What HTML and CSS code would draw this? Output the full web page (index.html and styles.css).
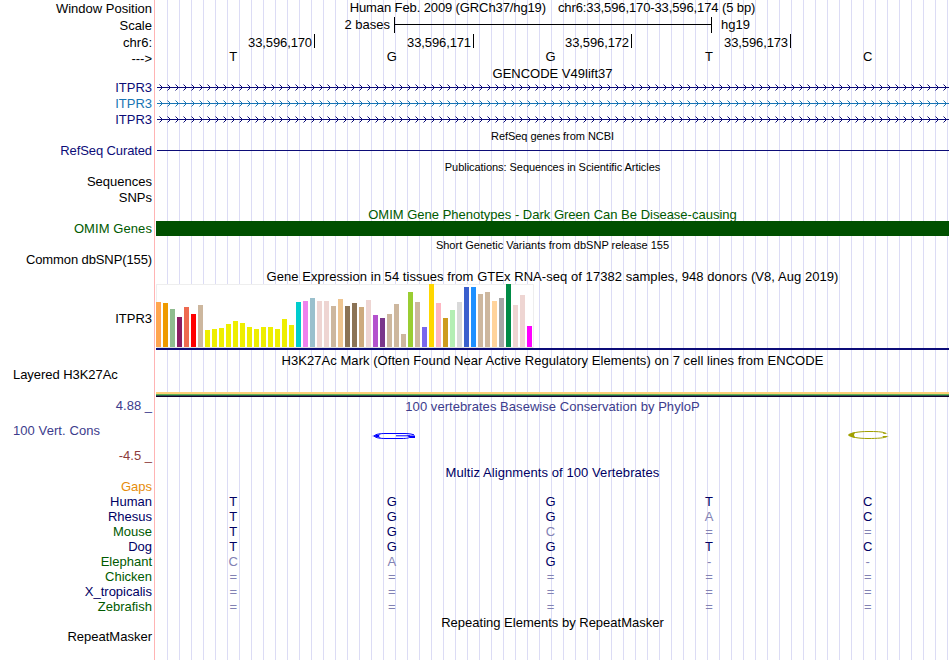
FILE: index.html
```html
<!DOCTYPE html>
<html lang="en">
<head>
<meta charset="utf-8">
<title>Genome Browser</title>
<link rel="stylesheet" href="styles.css">
</head>
<body>
<main class="browser">
  <section class="labels">
    <div class="label mt1">Window Position</div>
    <div class="label mt2">Scale</div>
    <div class="label mt2">chr6:</div>
    <div class="label mt1">---&gt;</div>
    <div class="label mt14 navy">ITPR3</div>
    <div class="label mt1 blue">ITPR3</div>
    <div class="label mt1 navy">ITPR3</div>
    <div class="label mt16 navy narrow">RefSeq Curated</div>
    <div class="label mt16">Sequences</div>
    <div class="label mt1">SNPs</div>
    <div class="label mt16 green wide">OMIM Genes</div>
    <div class="label mt16 narrow">Common dbSNP(155)</div>
    <div class="label mt44">ITPR3</div>
    <div class="label mt41 left tight">Layered H3K27Ac</div>
    <div class="label mt16 phylo">4.88 _</div>
    <div class="label mt10 left phylo wide">100 Vert. Cons</div>
    <div class="label mt10 maroon">-4.5 _</div>
    <div class="label mt16 orange">Gaps</div>
    <div class="label dark">Human</div>
    <div class="label dark">Rhesus</div>
    <div class="label green">Mouse</div>
    <div class="label dark">Dog</div>
    <div class="label green">Elephant</div>
    <div class="label green">Chicken</div>
    <div class="label dark">X_tropicalis</div>
    <div class="label green">Zebrafish</div>
    <div class="label mt15">RepeatMasker</div>
  </section>
  <section class="tracks">
    <div class="title position narrow"><span>Human Feb. 2009 (GRCh37/hg19)</span><span>chr6:33,596,170-33,596,174 (5 bp)</span></div>
    <div class="scale"><span class="scale-size">2 bases</span><i class="scale-bar"></i><span>hg19</span></div>
    <div class="ruler narrow"><span>33,596,170</span><span>33,596,171</span><span>33,596,172</span><span>33,596,173</span></div>
    <div class="bases"><b>T</b><b>G</b><b>G</b><b>T</b><b>C</b></div>
    <div class="title mt2">GENCODE V49lift37</div>
    <svg class="intron navy" width="793" height="48"></svg>
    <div class="title small mt2 tight">RefSeq genes from NCBI</div>
    <div class="refseq"></div>
    <div class="title small mt10 tight">Publications: Sequences in Scientific Articles</div>
    <div class="title green omim-title">OMIM Gene Phenotypes - Dark Green Can Be Disease-causing</div>
    <div class="omim"></div>
    <div class="title small mt3">Short Genetic Variants from dbSNP release 155</div>
    <div class="title gtex-title loose">Gene Expression in 54 tissues from GTEx RNA-seq of 17382 samples, 948 donors (V8, Aug 2019)</div>
    <div class="gtex"></div>
    <div class="gene-line"></div>
    <div class="title mt3 loose">H3K27Ac Mark (Often Found Near Active Regulatory Elements) on 7 cell lines from ENCODE</div>
    <div class="h3k"></div>
    <div class="title mt2 phylo loose">100 vertebrates Basewise Conservation by PhyloP</div>
    <div class="conservation">
      <svg class="logo-g" width="44" height="6" viewBox="0 0 44 6"><path d="M42 1.8C38 .5 34 .5 30 .5H14C8 .5 4 1 2 3C4 5 8 5.5 14 5.5H30C35 5.5 37 5 38 4M24 2.8H38" fill="none" stroke="#00f" stroke-width="1"/><path d="M0 3L9 1Q5 3 9 5ZM35 2.5H43V5H38Z" fill="#00f"/></svg>
      <svg class="logo-c" width="41" height="8" viewBox="0 0 41 8"><path d="M38 2.3C34 .5 28 .5 20 .5C10 .5 2.5 2 2.5 4C2.5 6 10 7.5 20 7.5C29 7.5 37 7 39 5.5" fill="none" stroke="#a0a000" stroke-width="1"/><path d="M0 4Q1 2 8 1Q4 4 8 7Q1 6 0 4ZM34 5H41L36 6.5ZM34 1.5L40 3H36Z" fill="#a0a000"/></svg>
    </div>
    <div class="title dark wide">Multiz Alignments of 100 Vertebrates</div>
    <div class="alignment">
      <div class="bases"><b>T</b><b>G</b><b>G</b><b>T</b><b>C</b></div>
      <div class="bases"><b>T</b><b>G</b><b>G</b><b class="diff">A</b><b>C</b></div>
      <div class="bases"><b>T</b><b>G</b><b class="diff">C</b><b class="diff">=</b><b class="diff">=</b></div>
      <div class="bases"><b>T</b><b>G</b><b>G</b><b>T</b><b>C</b></div>
      <div class="bases"><b class="diff">C</b><b class="diff">A</b><b>G</b><b class="diff">-</b><b class="diff">-</b></div>
      <div class="bases diff"><b>=</b><b>=</b><b>=</b><b>=</b><b>=</b></div>
      <div class="bases diff"><b>=</b><b>=</b><b>=</b><b>=</b><b>=</b></div>
      <div class="bases diff"><b>=</b><b>=</b><b>=</b><b>=</b><b>=</b></div>
    </div>
    <div class="title mt1">Repeating Elements by RepeatMasker</div>
  </section>
</main>
<script src="script.js"></script>
</body>
</html>
```
FILE: styles.css
```css
* { box-sizing: border-box; }
body { margin: 0; background: #fff; color: #000; font: 13px/15px "Liberation Sans", Arial, sans-serif; }
.browser { display: flex; width: 949px; height: 660px; overflow: hidden; }
.labels { width: 155px; padding-right: 2px; border-right: 1px solid #ffb4b4; display: flex; flex-direction: column; }
.label { height: 15px; flex: none; text-align: right; white-space: pre; }
.label.left { text-align: left; padding-left: 13px; }
.tracks { width: 793px; margin-left: 1px; display: flex; flex-direction: column;
  background: repeating-linear-gradient(90deg, transparent 0 11px, #dcdcf5 11px 12px); }
.tracks > * { flex: none; }
.title { height: 15px; text-align: center; white-space: nowrap; }
.small { font-size: 11px; height: 12px; line-height: 12px; }
.narrow { letter-spacing: -.11px; } .tight { letter-spacing: -.05px; }
.loose { letter-spacing: .05px; } .wide { letter-spacing: .08px; }
.mt1 { margin-top: 1px; } .mt2 { margin-top: 2px; } .mt3 { margin-top: 3px; }
.mt10 { margin-top: 10px; } .mt14 { margin-top: 14px; } .mt15 { margin-top: 15px; }
.mt16 { margin-top: 16px; } .mt41 { margin-top: 41px; } .mt44 { margin-top: 44px; }
.navy { color: #0c0c78; } .blue { color: #1874b4; } .green { color: #005a00; }
.dark { color: #000064; } .phylo { color: #3c3c8c; } .maroon { color: #8c3c3c; } .orange { color: #e68c0a; }
.position { display: flex; justify-content: center; gap: 12px; }
.scale { display: flex; margin-top: 2px; height: 16px; }
.scale-size { width: 238px; padding-right: 4px; text-align: right; }
.scale-bar { width: 318px; height: 16px; margin-right: 9px; border: solid #000; border-width: 0 1px;
  background: linear-gradient(#000, #000) 0 7px / 100% 1px no-repeat; }
.ruler { display: grid; grid-template-columns: 159px 159px 158px 159px; margin-top: 1px; height: 15px; }
.ruler span { height: 14px; border-right: 1px solid #000; padding: 1px 2px 0 0; text-align: right; }
.bases { display: grid; grid-template-columns: repeat(5, 158.6px); height: 15px; margin-left: -2px; width: 793px; text-align: center; }
.bases b { font-weight: normal; }
.intron { display: block; margin-top: -1px; height: 48px; }
.refseq { height: 1px; margin: 8px 0 0 1px; background: #0c0c78; }
.omim-title { margin-top: 34px; }
.omim { height: 15px; margin-top: -1px; background: #005000; }
.gtex-title { margin-top: 18px; }
.gtex { display: flex; align-items: flex-end; gap: 2px; width: 378px; height: 64px; padding-bottom: 1px;
  background: linear-gradient(#ddd, #ddd) 0 100% / 100% 1px no-repeat, #fff; box-shadow: inset 0 1px #eee, inset -1px 0 #eee, inset 1px 0 #eee; }
.gtex i { width: 5px; flex: none; }
.gene-line { height: 2px; background: #0c0c78; }
.h3k { height: 5px; margin-top: 24px; background: linear-gradient(#ffcf78 0 2px, #64b450 2px 3px, #285a50 3px 4px, #140028 4px); }
.conservation { display: flex; align-items: flex-start; height: 51px; padding-top: 17px; }
.logo-g { margin: 2px 0 0 216px; }
.logo-c { margin-left: 432px; }
.alignment { margin-top: 14px; color: #000064; }
.diff { color: #8282b4; }
```
FILE: script.js
```js
// Median expression per tissue: [colour, bar height in pixels]
const tissues = [
  ["ffa54f",45],["ee9a00",44],["8fbc8f",38],["8b1c62",30],["ee6a50",40],["ff0000",33],["cdb79e",42],
  ["eeee00",17],["eeee00",18],["eeee00",19],["eeee00",23],["eeee00",26],["eeee00",24],["eeee00",20],
  ["eeee00",18],["eeee00",20],["eeee00",20],["eeee00",18],["eeee00",28],["eeee00",22],
  ["00cdcd",45],["ee82ee",46],["9ac0cd",49],["eed5d2",46],["eed5d2",46],["cdb79e",41],["eec591",48],
  ["8b7355",41],["8b7355",44],["cdaa7d",40],["eed5d2",47],["b452cd",32],["7a378b",29],["cdb79e",33],
  ["cdb79e",43],["cdb79e",13],["9acd32",55],["cdb79e",45],["7a67ee",20],["ffd700",63],["ffb6c1",44],
  ["cd9b1d",29],["b4eeb4",37],["d9d9d9",45],["3a5fcd",60],["1e90ff",60],["cdb79e",53],["cdb79e",55],
  ["ffd39b",46],["a6a6a6",49],["008b45",63],["eed5d2",42],["eed5d2",52],["ff00ff",21]
];
document.querySelector(".gtex").innerHTML = tissues
  .map(([c, h]) => `<i style="height:${h}px;background:#${c}"></i>`).join("");

// Transcripts: an intron line with strand arrows every 8px
let d = "";
[["#0c0c78", 7], ["#1874b4", 23], ["#0c0c78", 39]].forEach(([c, y]) => {
  let p = "";
  for (let x = 3; x < 793; x += 8) p += `M${x + 0.5} ${y - 2.5}l3 3l-3 3`;
  d += `<path d="${p}" fill="none" stroke="${c}" stroke-width="1"/><rect x="1" y="${y}" width="792" height="1" fill="${c}"/>`;
});
document.querySelector(".intron").innerHTML = d;
```
